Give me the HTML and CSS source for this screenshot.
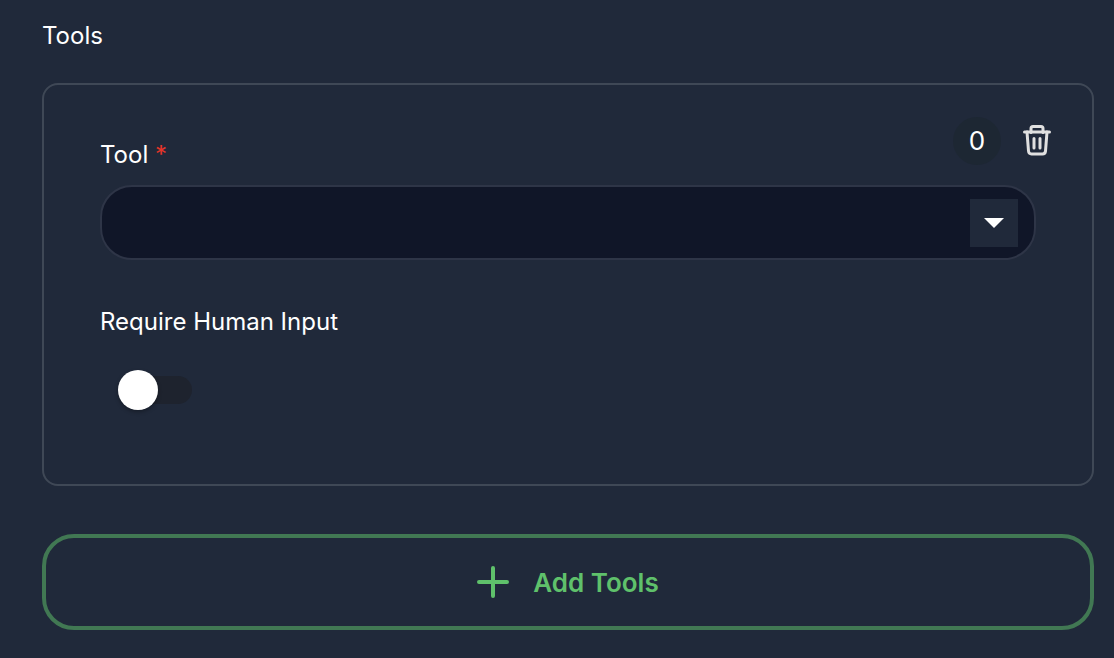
FILE: index.html
```
<!DOCTYPE html>
<html lang="en">
<head>
    <meta charset="UTF-8">
    <meta name="viewport" content="width=device-width, initial-scale=1">
    <title>Tools</title>
    <link rel="stylesheet" href="styles.css">
</head>
<body>
    <form class="tools">
        <h1 class="title">Tools</h1>

        <section class="card">
            <div class="card-header">
                <label class="label" for="tool">Tool <span class="required">*</span></label>
                <div class="actions">
                    <span class="badge">0</span>
                    <button class="delete" type="button" aria-label="Delete">
                        <svg width="32" height="32" viewBox="0 0 32 32" fill="none" stroke="currentColor" stroke-width="3" stroke-linecap="round" stroke-linejoin="round">
                            <path d="M3.500 7h25" />
                            <path d="M10 7V3q0-2 2-2h8q2 0 2 2v4" transform="translate(0 .5)" />
                            <path d="M6 7l1.500 19q.3 3 3 3h11q2.700 0 3-3L26 7" />
                            <path d="M13 13.500v9.500M19 13.500v9.500" />
                        </svg>
                    </button>
                </div>
            </div>

            <div class="card-body">
                <div class="select">
                    <select id="tool" required>
                        <option value=""></option>
                    </select>
                    <span class="arrow">
                        <svg width="20" height="10" viewBox="0 0 20 10"><path d="M0 0h20L10 10z" fill="currentColor" /></svg>
                    </span>
                </div>

                <label class="label" for="human-input">Require Human Input</label>
                <input class="switch" type="checkbox" role="switch" id="human-input">
            </div>
        </section>

        <button class="add" type="button">
            <svg width="32" height="32" viewBox="0 0 32 32" fill="none" stroke="currentColor" stroke-width="4" stroke-linecap="round">
                <path d="M16 2v28M2 16h28" />
            </svg>
            Add Tools
        </button>
    </form>
</body>
</html>
```
FILE: styles.css
```
* {
    box-sizing: border-box;
}
body {
    margin: 0;
    background-color: #20293a;
    color: white;
    font-family: Inter, sans-serif;
    font-size: 24px;
    line-height: 32px;
}
button {
    font-family: inherit;
    cursor: pointer;
}
svg {
    display: block;
}
.tools {
    padding: 20px 20px 28px 42px;
}
.title {
    margin: 0 0 31px;
    font-size: 24px;
    font-weight: 400;
}
.card {
    border: 2px solid #3f4856;
    border-radius: 16px;
}
.card-header {
    display: flex;
    justify-content: space-between;
    align-items: flex-end;
    height: 86px;
    padding: 32px 39px 0 56px;
}
.label {
    display: block;
}
.required {
    color: #e53529;
}
.actions {
    display: flex;
    align-items: center;
    align-self: flex-start;
    gap: 20px;
}
.badge {
    width: 48px;
    height: 48px;
    border-radius: 50%;
    background-color: #1d2733;
    font-size: 26px;
    line-height: 48px;
    text-align: center;
}
.delete {
    padding: 0;
    border: none;
    background: none;
    color: #e0e0e0;
}
.card-body {
    padding: 14px 56px 80px;
}
.select {
    position: relative;
    margin-bottom: 46px;
}
.select select {
    display: block;
    width: 100%;
    height: 75px;
    padding: 0 80px 0 28px;
    border: 2px solid #2e3547;
    border-radius: 32px;
    background-color: #101628;
    color: white;
    font: inherit;
    appearance: none;
}
/* sits over the right end of the select */
.arrow {
    position: absolute;
    top: 14px;
    right: 18px;
    display: flex;
    justify-content: center;
    align-items: center;
    width: 48px;
    height: 48px;
    background-color: #20293a;
    pointer-events: none;
}
.switch {
    position: relative;
    display: block;
    width: 68px;
    height: 28px;
    margin: 38px 0 0 24px;
    border-radius: 14px;
    background-color: #1e232e;
    appearance: none;
    cursor: pointer;
}
.switch::before {
    content: "";
    position: absolute;
    top: -6px;
    left: -6px;
    width: 40px;
    height: 40px;
    border-radius: 50%;
    background-color: white;
    box-shadow: 0 2px 4px rgba(0, 0, 0, 0.3);
}
.switch:checked::before {
    left: 34px;
}
.add {
    display: flex;
    justify-content: center;
    align-items: center;
    gap: 24px;
    width: 100%;
    height: 96px;
    margin-top: 48px;
    border: 4px solid #417853;
    border-radius: 32px;
    background: none;
    color: #5fc16b;
    font-size: 26px;
    font-weight: 600;
}
```
